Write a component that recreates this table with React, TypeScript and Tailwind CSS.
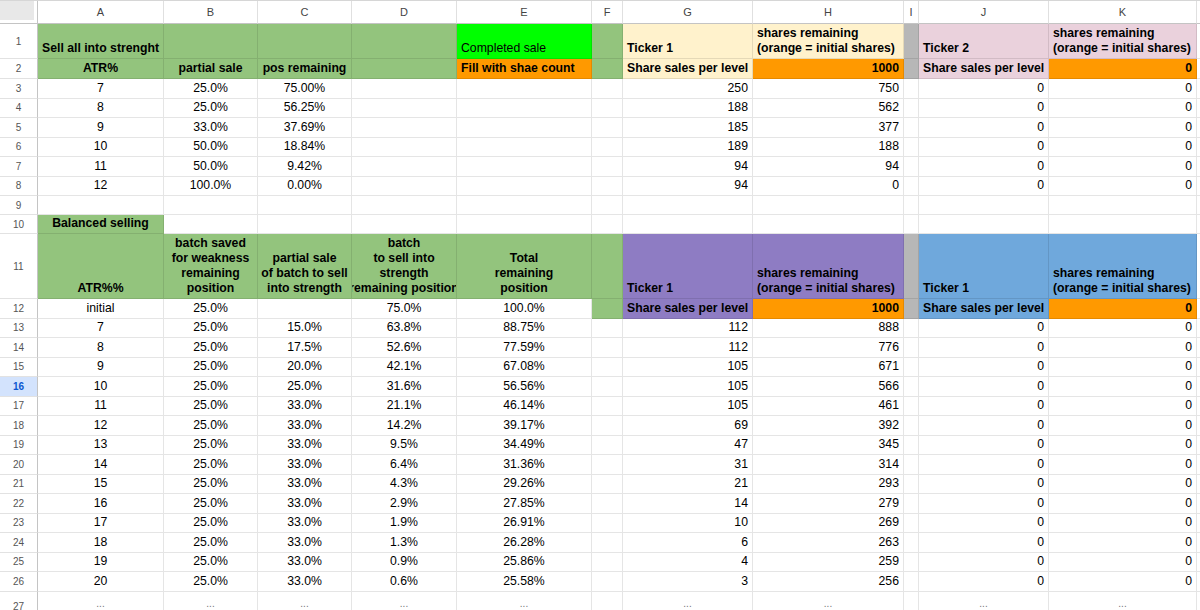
type Cell = {
  t?: string | string[];
  bg?: string;
  a?: 'l' | 'c' | 'r';
  b?: boolean;
};

const BG: Record<string, string> = {
  w: 'bg-white',
  g: 'bg-[#93c47d]',
  lime: 'bg-[#00ff00]',
  o: 'bg-[#ff9900]',
  y: 'bg-[#fff2cc]',
  p: 'bg-[#ead1dc]',
  gray: 'bg-[#b7b7b7]',
  purple: 'bg-[#8e7cc3]',
  blue: 'bg-[#6fa8dc]',
};

const ALIGN = { l: 'items-start', c: 'items-center', r: 'items-end' };

const COLS = ['A', 'B', 'C', 'D', 'E', 'F', 'G', 'H', 'I', 'J', 'K'];

const SR = ['shares remaining', '(orange = initial shares)'];

const top: Cell[][] = [
  [
    { t: 'Sell all into strenght', bg: 'g', a: 'l', b: true },
    { bg: 'g' },
    { bg: 'g' },
    { bg: 'g' },
    { t: 'Completed sale', bg: 'lime', a: 'l' },
    { bg: 'g' },
    { t: 'Ticker 1', bg: 'y', a: 'l', b: true },
    { t: SR, bg: 'y', a: 'l', b: true },
    { bg: 'gray' },
    { t: 'Ticker 2', bg: 'p', a: 'l', b: true },
    { t: SR, bg: 'p', a: 'l', b: true },
  ],
  [
    { t: 'ATR%', bg: 'g', b: true },
    { t: 'partial sale', bg: 'g', b: true },
    { t: 'pos remaining', bg: 'g', b: true },
    { bg: 'g' },
    { t: 'Fill with shae count', bg: 'o', a: 'l', b: true },
    { bg: 'g' },
    { t: 'Share sales per level', bg: 'y', a: 'l', b: true },
    { t: '1000', bg: 'o', a: 'r', b: true },
    { bg: 'gray' },
    { t: 'Share sales per level', bg: 'p', a: 'l', b: true },
    { t: '0', bg: 'o', a: 'r', b: true },
  ],
];

const sellAll = [
  ['7', '25.0%', '75.00%', '250', '750'],
  ['8', '25.0%', '56.25%', '188', '562'],
  ['9', '33.0%', '37.69%', '185', '377'],
  ['10', '50.0%', '18.84%', '189', '188'],
  ['11', '50.0%', '9.42%', '94', '94'],
  ['12', '100.0%', '0.00%', '94', '0'],
];

const balanced = [
  ['7', '15.0%', '63.8%', '88.75%', '112', '888'],
  ['8', '17.5%', '52.6%', '77.59%', '112', '776'],
  ['9', '20.0%', '42.1%', '67.08%', '105', '671'],
  ['10', '25.0%', '31.6%', '56.56%', '105', '566'],
  ['11', '33.0%', '21.1%', '46.14%', '105', '461'],
  ['12', '33.0%', '14.2%', '39.17%', '69', '392'],
  ['13', '33.0%', '9.5%', '34.49%', '47', '345'],
  ['14', '33.0%', '6.4%', '31.36%', '31', '314'],
  ['15', '33.0%', '4.3%', '29.26%', '21', '293'],
  ['16', '33.0%', '2.9%', '27.85%', '14', '279'],
  ['17', '33.0%', '1.9%', '26.91%', '10', '269'],
  ['18', '33.0%', '1.3%', '26.28%', '6', '263'],
  ['19', '33.0%', '0.9%', '25.86%', '4', '259'],
  ['20', '33.0%', '0.6%', '25.58%', '3', '256'],
];

const rows: Cell[][] = [
  ...top,
  ...sellAll.map((r) => [
    { t: r[0] },
    { t: r[1] },
    { t: r[2] },
    {},
    {},
    {},
    { t: r[3], a: 'r' as const },
    { t: r[4], a: 'r' as const },
    {},
    { t: '0', a: 'r' as const },
    { t: '0', a: 'r' as const },
  ]),
  [],
  [{ t: 'Balanced selling', bg: 'g', b: true }],
  [
    { t: 'ATR%%', bg: 'g', b: true },
    { t: ['batch saved', 'for weakness', 'remaining', 'position'], bg: 'g', b: true },
    { t: ['partial sale', 'of batch to sell', 'into strength'], bg: 'g', b: true },
    { t: ['batch', 'to sell into', 'strength', 'remaining position'], bg: 'g', b: true },
    { t: ['Total', 'remaining', 'position'], bg: 'g', b: true },
    { bg: 'g' },
    { t: 'Ticker 1', bg: 'purple', a: 'l', b: true },
    { t: SR, bg: 'purple', a: 'l', b: true },
    { bg: 'gray' },
    { t: 'Ticker 1', bg: 'blue', a: 'l', b: true },
    { t: SR, bg: 'blue', a: 'l', b: true },
  ],
  [
    { t: 'initial' },
    { t: '25.0%' },
    {},
    { t: '75.0%' },
    { t: '100.0%' },
    { bg: 'g' },
    { t: 'Share sales per level', bg: 'purple', a: 'l', b: true },
    { t: '1000', bg: 'o', a: 'r', b: true },
    { bg: 'gray' },
    { t: 'Share sales per level', bg: 'blue', a: 'l', b: true },
    { t: '0', bg: 'o', a: 'r', b: true },
  ],
  ...balanced.map((r) => [
    { t: r[0] },
    { t: '25.0%' },
    { t: r[1] },
    { t: r[2] },
    { t: r[3] },
    {},
    { t: r[4], a: 'r' as const },
    { t: r[5], a: 'r' as const },
    {},
    { t: '0', a: 'r' as const },
    { t: '0', a: 'r' as const },
  ]),
];

const SheetCell = ({ c }: { c: Cell }) => {
  const lines = c.t === undefined ? [] : Array.isArray(c.t) ? c.t : [c.t];
  return (
    <div
      className={`flex flex-col justify-end overflow-hidden border-r border-b border-black/10 px-[4px] pb-[2px] leading-[15px] ${BG[c.bg ?? 'w']} ${ALIGN[c.a ?? 'c']} ${c.b ? 'font-bold' : ''}`}
    >
      {lines.map((l, i) => (
        <span key={i} className="whitespace-nowrap">
          {l}
        </span>
      ))}
    </div>
  );
};

const RowHead = ({ n }: { n: number }) => (
  <div
    className={`flex items-center justify-center border-r border-r-[#c4c4c4] border-b border-b-[#e2e2e2] text-[10px] ${n === 16 ? 'bg-[#d3e3fd] text-[#0b57d0] font-bold' : 'bg-white text-[#555]'}`}
  >
    {n}
  </div>
);

export default function App() {
  return (
    <div className="w-[1200px] h-[610px] overflow-hidden bg-white font-['Liberation_Sans',Arial,sans-serif] text-[12.25px] text-black">
      <div className="grid grid-cols-[38px_126px_94px_94px_105px_135px_31px_130px_151px_15px_130px_148px_1fr] grid-rows-[23px_35px_20px_repeat(6,19.5px)_19px_19px_65px_19.5px_repeat(14,19.5px)_30px] border-t border-[#d6d6d6]">
        {/* column headers */}
        <div className="border-r border-r-[#c4c4c4] border-b border-b-[#c4c4c4] bg-white pr-[3px] pb-[3px]">
          <div className="h-full bg-[#e8e8e8]" />
        </div>
        {COLS.map((l) => (
          <div
            key={l}
            className="flex items-center justify-center border-r border-r-[#e0e0e0] border-b border-b-[#c4c4c4] bg-white text-[11px] text-[#444]"
          >
            {l}
          </div>
        ))}
        <div className="border-b border-b-[#c4c4c4] bg-white" />

        {/* rows 1-26 */}
        {rows.map((r, i) => (
          <div key={i} className="contents">
            <RowHead n={i + 1} />
            {COLS.map((_, j) => (
              <SheetCell key={j} c={r[j] ?? {}} />
            ))}
            <div className="border-b border-black/10" />
          </div>
        ))}

        {/* row 27 */}
        <RowHead n={27} />
        {COLS.map((l) => (
          <div
            key={l}
            className="flex justify-center border-r border-black/10 pt-[6px] text-[10px] leading-[12px] text-[#777]"
          >
            {l === 'F' || l === 'I' ? '' : '...'}
          </div>
        ))}
        <div />
      </div>
    </div>
  );
}
